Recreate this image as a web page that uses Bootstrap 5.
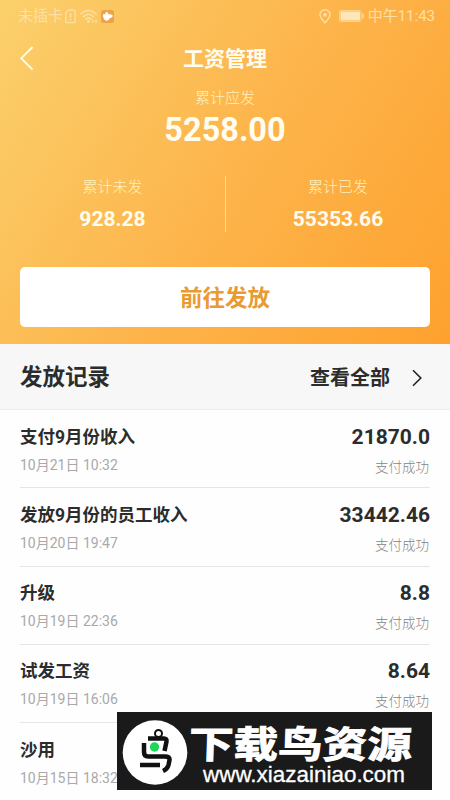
<!DOCTYPE html>
<html lang="zh-CN">
<head>
<meta charset="utf-8">
<meta name="viewport" content="width=device-width, initial-scale=1">
<title>工资管理</title>
<link href="https://cdn.jsdelivr.net/npm/bootstrap@5.3.0/dist/css/bootstrap.min.css" rel="stylesheet">
<style>
body{font-family:Roboto,"Noto Sans CJK SC",sans-serif;color:#2c2c2c;background:#fefefe;height:800px;overflow:hidden}
.hero{height:344px;background:linear-gradient(122deg,#fbd06c 0%,#fdb54c 50%,#fea12e 100%);color:#fffdf0;padding:0 20px}
.statusbar{height:32px;font-size:15px;line-height:32px;color:#fee0a4;margin:0 -5px 0 -2px}
.titlebar{height:55px;font-size:21px;padding-top:1px}
.back{left:0;top:14px}
.cap-label{font-size:15px;line-height:22px;color:#fff0bd;font-weight:300}
.total{font-size:32.5px;line-height:43px}
.split{height:56px;margin:24px -20px 0}
.split>div+div{border-left:1px solid #fddb95}
.sum{font-size:21px;line-height:26px;padding-top:8px}
.pay{height:60px;margin-top:34.600px;border-radius:5px;font-size:22.5px;color:#e99a33;background:#fff}
.pay span{padding-top:5px}
.pay:hover{background:#fff;color:#e99a33}
.rec-head{height:66px;background:#f7f7f7;border-bottom:1px solid #ececec;padding:2px 28px 0 20px}
.rec-head h2{font-size:22.5px}
.all{font-size:20px;gap:22px}
.rec{height:78.3px;border-bottom:1px solid #e6e6e6;padding-top:13.500px}
.rec-name{font-size:17.5px;line-height:26px}
.rec-sum{font-size:21px;line-height:26px}
.rec-time{font-size:14px;line-height:20px;color:#a9a9a9;padding-top:5px}
.rec-state{font-size:13.5px;line-height:20px;color:#858585;font-weight:300;padding:7px 1px 0 0}
.brand-strip{left:117px;top:712px;width:315px;height:78px;background:#1a1a1a}
</style>
<script src="https://cdn.jsdelivr.net/npm/bootstrap@5.3.0/dist/js/bootstrap.bundle.min.js"></script>
</head>
<body class="position-relative">
<header class="hero">
  <div class="statusbar d-flex align-items-center justify-content-between">
    <div class="d-flex align-items-center">
      <span>未插卡</span>
      <svg style="margin-left:2px" width="11" height="15" viewBox="0 0 11 15" fill="none" stroke="#fee0a4" stroke-width="1.4"><path d="M3.6 1H9.2q1 0 1 1v10.6q0 1-1 1H1.8q-1 0-1-1V4z"/><path d="M5.5 4v4.5M5.5 10v1.6" stroke-width="1.6"/></svg>
      <svg class="ms-1" width="18" height="15" viewBox="0 0 18 15" fill="none" stroke="#fee0a4" stroke-width="1.5" stroke-linecap="round"><path d="M1 5Q8.500-2 16 5M3.500 7.600Q8.500 3 13.500 7.600M5.800 10.200Q8.500 8 11.200 10.200"/><circle cx="8.500" cy="12.500" r=".7" fill="#fee3ac"/><path d="M13 11v2.500M16 11v2.500" stroke-width="1.200"/></svg>
      <svg style="margin-left:3px" width="13" height="13" viewBox="0 0 13 13"><rect width="13" height="13" rx="2.500" fill="#eda347"/><path d="M1.800 4.200h7.700v.4c3-.6 3 3.700-.6 3.300Q7.900 10.800 5.700 10.800 2 10.200 1.800 4.200z" fill="#fff"/><path d="M3.500 4.400L5.700 1.400 7.900 4.400z" fill="#fff"/></svg>
    </div>
    <div class="d-flex align-items-center">
      <svg width="12" height="15" viewBox="0 0 12 15" fill="none" stroke="#fee0a4" stroke-width="1.500"><path d="M6 13.800C3 10.400 1 8.400 1 5.800a5 5 0 0 1 10 0C11 8.400 9 10.400 6 13.800z"/><circle cx="6" cy="5.800" r="1.100" fill="#fee3ac"/></svg>
      <svg class="mx-1 ms-2" width="25" height="12" viewBox="0 0 25 12"><rect x=".5" y=".5" width="21.500" height="11" rx="1.500" fill="none" stroke="#fdd38a"/><rect x="1.500" y="1.500" width="19.500" height="9" fill="#fee6b8"/><path d="M24 3.500v5" stroke="#fee0a4" stroke-width="1.300"/></svg>
      <span>中午11:43</span>
    </div>
  </div>
  <div class="titlebar position-relative d-flex align-items-center justify-content-center fw-bold">
    <svg class="back position-absolute" width="14" height="25" viewBox="0 0 14 25" fill="none" stroke="#fff9df" stroke-width="2"><path d="M12.600 1L1.200 12.400 12.600 23.600"/></svg>
    <span>工资管理</span>
  </div>
  <div class="text-center">
    <div class="cap-label">累计应发</div>
    <div class="total fw-bold">5258.00</div>
  </div>
  <div class="split row gx-0 text-center">
    <div class="col-6"><div class="cap-label">累计未发</div><div class="sum fw-bold">928.28</div></div>
    <div class="col-6"><div class="cap-label">累计已发</div><div class="sum fw-bold">55353.66</div></div>
  </div>
  <button class="btn pay w-100 border-0 fw-bold p-0 d-flex align-items-center justify-content-center"><span>前往发放</span></button>
</header>
<section>
  <div class="rec-head d-flex align-items-center justify-content-between">
    <h2 class="fw-bold m-0">发放记录</h2>
    <div class="all d-flex align-items-center fw-bold"><span>查看全部</span><svg width="10" height="18" viewBox="0 0 10 18" fill="none" stroke="#222" stroke-width="1.600"><path d="M1 1.200L8.800 9 1 16.800"/></svg></div>
  </div>
  <div class="mx-3 px-1">
    <div class="rec d-flex justify-content-between"><div><div class="rec-name fw-bold">支付9月份收入</div><div class="rec-time">10月21日 10:32</div></div><div class="text-end"><div class="rec-sum fw-bold">21870.0</div><div class="rec-state">支付成功</div></div></div>
    <div class="rec d-flex justify-content-between"><div><div class="rec-name fw-bold">发放9月份的员工收入</div><div class="rec-time">10月20日 19:47</div></div><div class="text-end"><div class="rec-sum fw-bold">33442.46</div><div class="rec-state">支付成功</div></div></div>
    <div class="rec d-flex justify-content-between"><div><div class="rec-name fw-bold">升级</div><div class="rec-time">10月19日 22:36</div></div><div class="text-end"><div class="rec-sum fw-bold">8.8</div><div class="rec-state">支付成功</div></div></div>
    <div class="rec d-flex justify-content-between"><div><div class="rec-name fw-bold">试发工资</div><div class="rec-time">10月19日 16:06</div></div><div class="text-end"><div class="rec-sum fw-bold">8.64</div><div class="rec-state">支付成功</div></div></div>
    <div class="rec border-0"><div class="rec-name fw-bold">沙用</div><div class="rec-time">10月15日 18:32</div></div>
  </div>
</section>
<div class="brand-strip position-absolute">
  <svg class="d-block" width="315" height="78" viewBox="0 0 315 78">
    <circle cx="38" cy="40.500" r="32.300" fill="#fff"/>
    <g fill="none" stroke="#111" stroke-width="4.500">
      <path d="M31 26.500H47Q50 26.500 49.500 29.500L47.500 39"/>
      <path d="M27 31V40Q27 44.500 31 44.500H48Q53 44.500 52.500 48L51.500 53Q50.500 57 46 59"/>
      <path d="M23 53H43"/>
      <circle cx="41.500" cy="21.500" r="3.500" stroke-width="2"/>
    </g>
    <circle cx="37.500" cy="35" r="4.700" fill="#20d857"/>
    <text transform="translate(71.500 45.500) skewX(-2) scale(1 .84)" font-family="Noto Sans CJK SC,sans-serif" font-weight="700" font-size="44.500" textLength="223" fill="#fff" stroke="#fff" stroke-width="1.200">下载鸟资源</text>
    <text x="86" y="70" font-family="Liberation Sans,sans-serif" font-size="22" textLength="202" lengthAdjust="spacingAndGlyphs" fill="#fff" stroke="#fff" stroke-width=".3">www.xiazainiao.com</text>
  </svg>
</div>
</body>
</html>
